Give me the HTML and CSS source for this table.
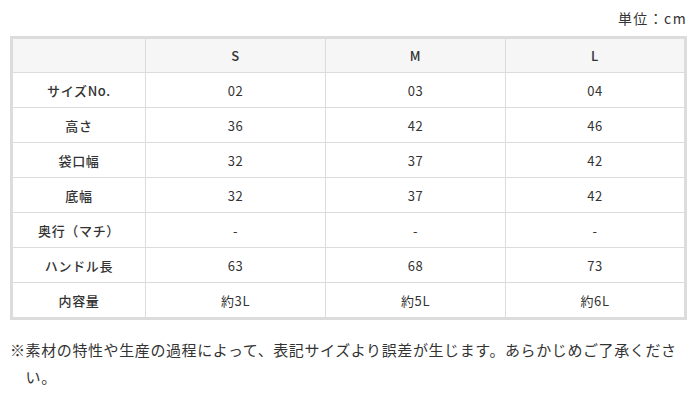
FILE: index.html
```html
<!DOCTYPE html>
<html lang="ja">
<head>
<meta charset="utf-8">
<link rel="stylesheet" href="styles.css">
</head>
<body>
<div class="page">
  <p class="unit">単位：cm</p>
  <table class="size-table">
    <colgroup>
      <col class="c-label"><col class="c-val"><col class="c-val"><col class="c-last">
    </colgroup>
    <thead>
      <tr><th></th><th>S</th><th>M</th><th>L</th></tr>
    </thead>
    <tbody>
      <tr><th>サイズNo.</th><td>02</td><td>03</td><td>04</td></tr>
      <tr><th>高さ</th><td>36</td><td>42</td><td>46</td></tr>
      <tr><th>袋口幅</th><td>32</td><td>37</td><td>42</td></tr>
      <tr><th>底幅</th><td>32</td><td>37</td><td>42</td></tr>
      <tr><th>奥行（マチ）</th><td>-</td><td>-</td><td>-</td></tr>
      <tr><th>ハンドル長</th><td>63</td><td>68</td><td>73</td></tr>
      <tr><th>内容量</th><td>約3L</td><td>約5L</td><td>約6L</td></tr>
    </tbody>
  </table>
  <p class="note">※素材の特性や生産の過程によって、表記サイズより誤差が生じます。あらかじめご了承ください。</p>
</div>
</body>
</html>
```
FILE: styles.css
```css
* { box-sizing: border-box; }
html, body { margin: 0; padding: 0; background: #fff; }
body {
  font-family: "Noto Sans CJK JP", "Noto Sans", sans-serif;
  color: #333;
}
.page {
  width: 698px;
  padding: 0 11px 0 10px;
}
.unit {
  margin: 0;
  padding-top: 7px;
  height: 36px;
  text-align: right;
  font-size: 14px;
  line-height: 22px;
  letter-spacing: 0.1em;
}
.size-table {
  width: 677px;
  table-layout: fixed;
  border-collapse: separate;
  border-spacing: 0;
  border: 3px solid #dcdcdc;
  font-size: 13px;
}
.c-label { width: 133px; }
.c-val { width: 180px; }
.c-last { width: 178px; }
.size-table th,
.size-table td {
  padding: 0;
  text-align: center;
  height: 35px;
  border-right: 1px solid #dcdcdc;
  border-bottom: 1px solid #dcdcdc;
  font-weight: 400;
  letter-spacing: 0.05em;
}
.size-table th:last-child,
.size-table td:last-child { border-right: none; }
.size-table tbody tr:last-child th,
.size-table tbody tr:last-child td { border-bottom: none; height: 34px; }
.size-table thead th {
  background: #f6f6f6;
  height: 34px;
  font-weight: 500;
}
.size-table tbody th { font-weight: 500; }
.note {
  margin: 16px 0 0;
  padding-left: 15.6px;
  text-indent: -15.6px;
  font-size: 15px;
  line-height: 27px;
  letter-spacing: 0.04em;
}
```
